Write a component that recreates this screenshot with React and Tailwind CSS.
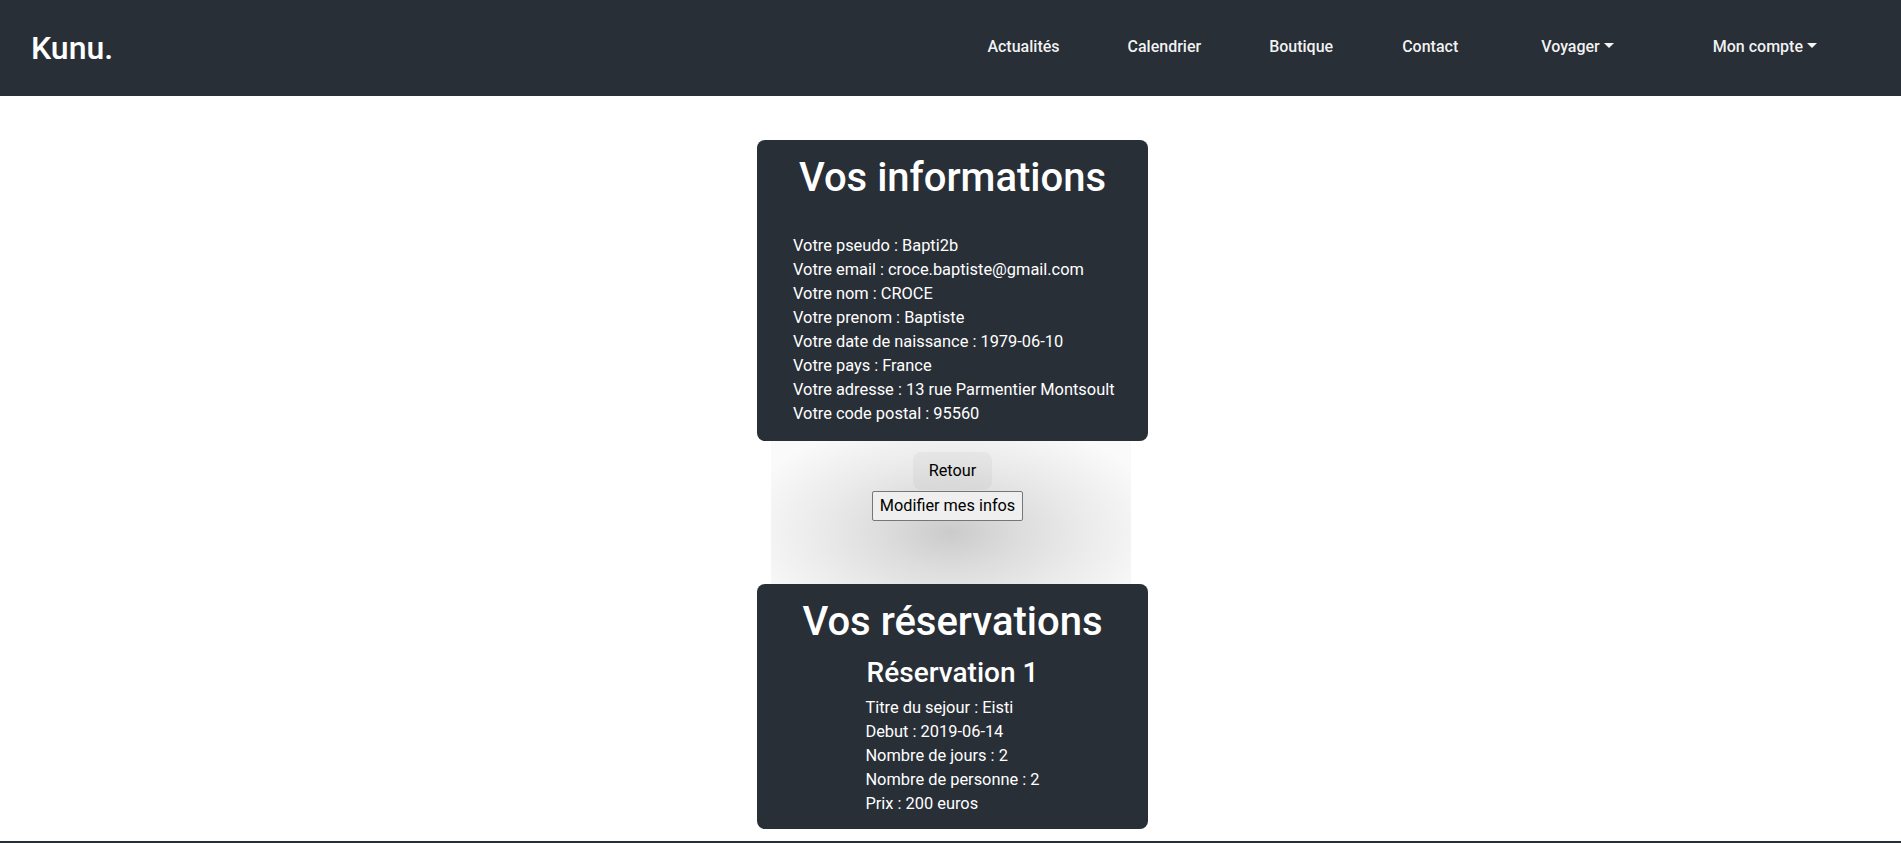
import React from 'react';

const infos = [
  ['Votre pseudo', 'Bapti2b'],
  ['Votre email', 'croce.baptiste@gmail.com'],
  ['Votre nom', 'CROCE'],
  ['Votre prenom', 'Baptiste'],
  ['Votre date de naissance', '1979-06-10'],
  ['Votre pays', 'France'],
  ['Votre adresse', '13 rue Parmentier Montsoult'],
  ['Votre code postal', '95560'],
];

const reservation = [
  ['Titre du sejour', 'Eisti'],
  ['Debut', '2019-06-14'],
  ['Nombre de jours', '2'],
  ['Nombre de personne', '2'],
  ['Prix', '200 euros'],
];

function Caret() {
  return (
    <span className="inline-block ml-[4px] align-[4px] w-0 h-0 border-t-[5px] border-x-[5px] border-b-0 border-x-transparent border-t-current" />
  );
}

function NavBar() {
  const links = [
    { label: 'Actualités', cls: '' },
    { label: 'Calendrier', cls: 'ml-[68px]' },
    { label: 'Boutique', cls: 'ml-[68px]' },
    { label: 'Contact', cls: 'ml-[69px]' },
    { label: 'Voyager', cls: 'ml-[83px]', drop: true },
    { label: 'Mon compte', cls: 'ml-[99px]', drop: true },
  ];
  return (
    <nav className="h-[96px] bg-[#292f37] flex items-center justify-between pl-[31px] pr-[84px]">
      <a href="#" className="text-[32px] leading-[1.2] font-medium text-white">Kunu.</a>
      <ul className="flex items-center pb-[2px]">
        {links.map((l) => (
          <li key={l.label} className={l.cls}>
            <a href="#" className="text-[16px] leading-[24px] font-medium text-white/95 whitespace-nowrap">
              {l.label}
              {l.drop && <Caret />}
            </a>
          </li>
        ))}
      </ul>
    </nav>
  );
}

export default function App() {
  return (
    <div className="min-h-screen bg-white font-['Roboto','Liberation_Sans',sans-serif] text-[#212529]">
      <NavBar />

      <main className="flex flex-col items-center pt-[44px]">
        {/* infos */}
        <section className="w-[391px] rounded-lg bg-[#292f37] text-white pt-[14px] pb-[15px] px-[36px] relative left-[2px]">
          <h1 className="text-[40px] leading-[1.2] font-medium text-center mb-[32px]">Vos informations</h1>
          <ul>
            {infos.map(([k, v]) => (
              <li key={k} className="text-[16.4px] leading-[24px] whitespace-nowrap">
                {k} : {v}
              </li>
            ))}
          </ul>
        </section>

        {/* actions */}
        <div className="w-[360px] h-[143px] flex flex-col items-center pt-[11px] bg-[radial-gradient(ellipse_60%_82%_at_50%_64%,#cbcbcb_0%,#dcdcdc_30%,#eaeaea_60%,#f4f4f4_85%,#fafafa_100%)]">
          <button className="ml-[4px] px-[16px] py-[7px] rounded-lg bg-black/[0.03] text-[16.3px] leading-[24px] text-black">
            Retour
          </button>
          <button className="mt-[1px] mr-[6px] px-[7px] py-[2px] border border-[#767676] rounded-[2px] bg-[#efefef] text-[16.3px] leading-[24px] text-black">
            Modifier mes infos
          </button>
        </div>

        {/* reservations */}
        <section className="w-[391px] rounded-lg bg-[#292f37] text-white pt-[14px] pb-[13px] text-center relative left-[2px]">
          <h1 className="text-[40px] leading-[1.2] font-medium mb-[10px]">Vos réservations</h1>
          <h3 className="text-[28px] leading-[1.2] font-medium mb-[6px]">Réservation 1</h3>
          <ul className="inline-block text-left">
            {reservation.map(([k, v]) => (
              <li key={k} className="text-[16.4px] leading-[24px] whitespace-nowrap">
                {k} : {v}
              </li>
            ))}
          </ul>
        </section>
      </main>

      <footer className="mt-[12px] h-[120px] bg-[#292f37]" />
    </div>
  );
}
